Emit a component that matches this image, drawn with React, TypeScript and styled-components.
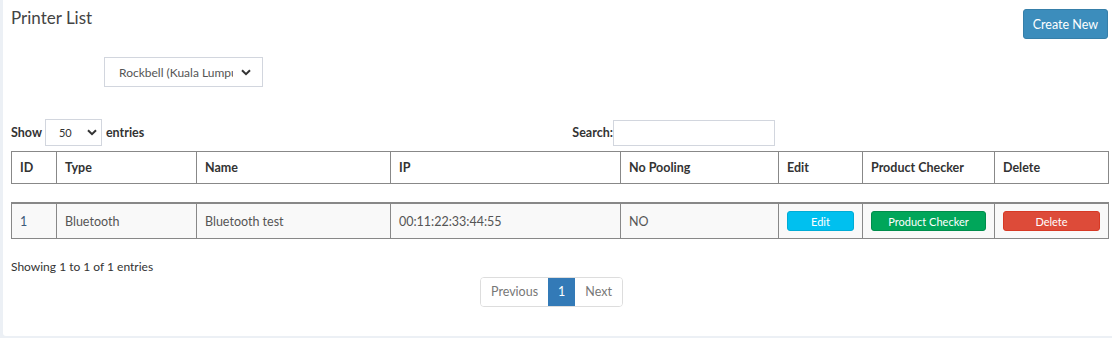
import React from 'react';
import styled, { createGlobalStyle } from 'styled-components';

const GlobalStyle = createGlobalStyle`
  body {
    margin: 0;
    background: #ecf0f5;
    font-family: 'Source Sans Pro', Lato, 'Liberation Sans', sans-serif;
    color: #333;
  }
`;

const Box = styled.div`
  margin-left: 3px;
  height: 336px;
  background: #fff;
  border-bottom-left-radius: 3px;
  padding: 0 4px 0 8px;
  box-sizing: border-box;
  overflow: hidden;
`;

const HeaderRow = styled.div`
  display: flex;
  justify-content: space-between;
  align-items: flex-start;
  padding-top: 9px;
  height: 30px;
`;

const Title = styled.h3`
  margin: 0;
  font-size: 17px;
  font-weight: 400;
  line-height: 18px;
  color: #444;
`;

const Button = styled.button<{ bg: string; border: string; small?: boolean }>`
  background: ${({ bg }) => bg};
  border: 1px solid ${({ border }) => border};
  color: #fff;
  border-radius: 3px;
  font-family: inherit;
  cursor: pointer;
  font-size: ${({ small }) => (small ? '11px' : '12.5px')};
  height: ${({ small }) => (small ? '20px' : '30px')};
  padding: 0 ${({ small }) => (small ? '4px' : '9px')};
  width: ${({ small }) => (small ? '100%' : 'auto')};
  display: block;
`;

const BranchSelect = styled.div`
  margin: 18px 0 0 93px;
  width: 159px;
  height: 30px;
  border: 1px solid #d2d6de;
  box-sizing: border-box;
  display: flex;
  align-items: center;
  padding: 0 11px 0 14px;
  font-size: 12px;
  color: #555;
`;

const SelectText = styled.span`
  flex: 1;
  white-space: nowrap;
  overflow: hidden;
  margin-right: 8px;
`;

const Chevron = () => (
  <svg width="10" height="7" viewBox="0 0 10 7">
    <path d="M1 1.2 L5 5.2 L9 1.2" fill="none" stroke="#333" strokeWidth="2" />
  </svg>
);

const ControlsRow = styled.div`
  display: flex;
  justify-content: space-between;
  align-items: center;
  margin-top: 32px;
  padding-right: 333px;
  height: 27px;
  font-size: 12.5px;
  font-weight: 700;
`;

const Inline = styled.label<{ tight?: boolean }>`
  display: flex;
  align-items: center;
  gap: ${({ tight }) => (tight ? '0' : '3px')};
`;

const LengthSelect = styled.div`
  width: 57px;
  height: 27px;
  border: 1px solid #d2d6de;
  box-sizing: border-box;
  display: flex;
  align-items: center;
  justify-content: space-between;
  padding: 0 4px 0 13px;
  font-size: 11px;
  font-weight: 400;
  margin-right: 1px;
`;

const SearchInput = styled.input`
  width: 162px;
  height: 26px;
  box-sizing: border-box;
  border: 1px solid #d2d6de;
  margin: 0;
`;

const Table = styled.table<{ gapTop: number }>`
  width: 1097px;
  table-layout: fixed;
  border-collapse: collapse;
  margin-top: ${({ gapTop }) => gapTop}px;
  font-size: 12.5px;
`;

const Th = styled.th`
  border: 1px solid #888;
  text-align: left;
  font-weight: 700;
  color: #333;
  height: 31px;
  padding: 0 8px;
`;

const Td = styled.td`
  border: 1px solid #888;
  border-top: 2px solid #888;
  background: #f9f9f9;
  color: #555;
  height: 34px;
  padding: 0 8px;
`;

const IdCell = styled(Td)`
  color: #3c5a7a;
`;

const Info = styled.div`
  margin-top: 20px;
  font-size: 12px;
  color: #333;
`;

const Pager = styled.div`
  display: flex;
  margin: 3px 0 0 469px;
  width: max-content;
  border: 1px solid #ddd;
  border-radius: 4px;
  overflow: hidden;
`;

const PageItem = styled.span<{ active?: boolean }>`
  height: 28px;
  line-height: 28px;
  padding: 0 10px;
  font-size: 12.5px;
  background: ${({ active }) => (active ? '#337ab7' : '#fff')};
  color: ${({ active }) => (active ? '#fff' : '#777')};
`;

const widths = [45, 140, 194, 230, 158, 84, 132, 114];

const Cols = () => (
  <colgroup>
    {widths.map((w, i) => (
      <col key={i} style={{ width: w }} />
    ))}
  </colgroup>
);

export default function App() {
  return (
    <>
      <GlobalStyle />
      <Box>
        <HeaderRow>
          <Title>Printer List</Title>
          <Button bg="#3c8dbc" border="#367fa9">Create New</Button>
        </HeaderRow>
        <BranchSelect>
          <SelectText>Rockbell (Kuala Lumpur)</SelectText>
          <Chevron />
        </BranchSelect>
        <ControlsRow>
          <Inline>
            Show
            <LengthSelect>
              50
              <Chevron />
            </LengthSelect>
            entries
          </Inline>
          <Inline tight>
            Search:
            <SearchInput />
          </Inline>
        </ControlsRow>
        <Table gapTop={5}>
          <Cols />
          <thead>
            <tr>
              <Th>ID</Th>
              <Th>Type</Th>
              <Th>Name</Th>
              <Th>IP</Th>
              <Th>No Pooling</Th>
              <Th>Edit</Th>
              <Th>Product Checker</Th>
              <Th>Delete</Th>
            </tr>
          </thead>
        </Table>
        <Table gapTop={18}>
          <Cols />
          <tbody>
            <tr>
              <IdCell>1</IdCell>
              <Td>Bluetooth</Td>
              <Td>Bluetooth test</Td>
              <Td>00:11:22:33:44:55</Td>
              <Td>NO</Td>
              <Td>
                <Button small bg="#00c0ef" border="#00acd6">Edit</Button>
              </Td>
              <Td>
                <Button small bg="#00a65a" border="#008d4c">Product Checker</Button>
              </Td>
              <Td>
                <Button small bg="#dd4b39" border="#d73925">Delete</Button>
              </Td>
            </tr>
          </tbody>
        </Table>
        <Info>Showing 1 to 1 of 1 entries</Info>
        <Pager>
          <PageItem>Previous</PageItem>
          <PageItem active>1</PageItem>
          <PageItem>Next</PageItem>
        </Pager>
      </Box>
    </>
  );
}
